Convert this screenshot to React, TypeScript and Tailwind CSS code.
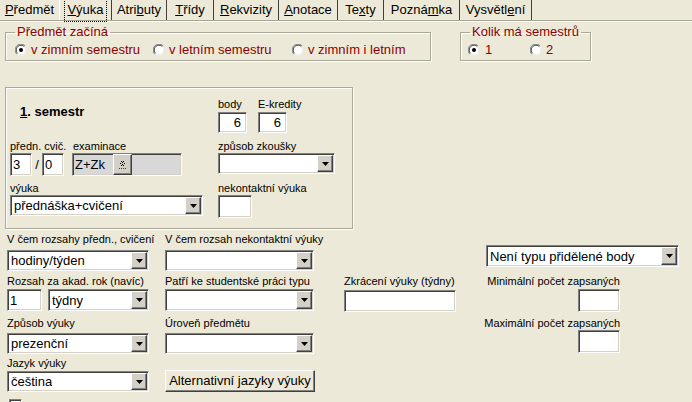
import React from "react";

const sunken =
  "border border-t-[#808080] border-l-[#808080] border-r-white border-b-white shadow-[inset_1px_1px_0_#404040,inset_-1px_-1px_0_#d4d0c8]";
const raised =
  "border border-t-white border-l-white border-r-[#404040] border-b-[#404040] shadow-[inset_-1px_-1px_0_#808080]";

const Label: React.FC<{ children: React.ReactNode; className?: string }> = ({ children, className = "" }) => (
  <div className={`h-[13px] text-[11px] leading-[13px] text-black whitespace-nowrap ${className}`}>{children}</div>
);

const Input: React.FC<{ value?: string; className?: string; right?: boolean }> = ({ value = "", className = "", right }) => (
  <div
    className={`flex items-center bg-white text-[13px] leading-none ${sunken} ${right ? "justify-end pr-[5px]" : "pl-[2px]"} ${className}`}
  >
    {value}
  </div>
);

const Select: React.FC<{ value?: string; className?: string }> = ({ value = "", className = "" }) => (
  <div className={`flex bg-white ${sunken} ${className}`}>
    <div className="flex flex-1 items-center pl-[3px] text-[13px] leading-none whitespace-nowrap overflow-hidden">{value}</div>
    <div className={`m-[1px] flex w-[16px] items-center justify-center bg-[#d4d0c8] ${raised}`}>
      <svg width="7" height="4" viewBox="0 0 7 4">
        <path d="M0 0h7L3.5 4z" fill="#000" />
      </svg>
    </div>
  </div>
);

const Radio: React.FC<{ checked?: boolean }> = ({ checked }) => (
  <svg width="12" height="12" viewBox="0 0 12 12" className="shrink-0">
    <circle cx="6" cy="6" r="5.5" fill="#fff" />
    <path d="M1.8 10.2A5.5 5.5 0 0 1 10.2 1.8" stroke="#808080" fill="none" />
    <path d="M2.6 9.4A4.5 4.5 0 0 1 9.4 2.6" stroke="#404040" fill="none" />
    <path d="M9.4 2.6A4.5 4.5 0 0 1 2.6 9.4" stroke="#e8e6dc" fill="none" />
    {checked && <circle cx="6" cy="6" r="2" fill="#000" />}
  </svg>
);

const tabs: { pre: string; key: string; post: string; w: string; active?: boolean }[] = [
  { pre: "", key: "P", post: "ředmět", w: "w-[59px]" },
  { pre: "", key: "V", post: "ýuka", w: "w-[53px]", active: true },
  { pre: "Atri", key: "b", post: "uty", w: "w-[55px]" },
  { pre: "", key: "T", post: "řídy", w: "w-[47px]" },
  { pre: "", key: "R", post: "ekvizity", w: "w-[65px]" },
  { pre: "", key: "A", post: "notace", w: "w-[59px]" },
  { pre: "Te", key: "x", post: "ty", w: "w-[46px]" },
  { pre: "Pozná", key: "m", post: "ka", w: "w-[76px]" },
  { pre: "Vysvětl", key: "e", post: "ní", w: "w-[72px]" },
];

const red = "text-[#8c0000]";

export default function App() {
  return (
    <div className="h-[402px] w-[692px] overflow-hidden bg-[#ece9d8] font-[Liberation_Sans,Arial,sans-serif] text-black">
      {/* tab strip */}
      <div className="flex h-[21px] border-b border-[#a8a597] shadow-[0_1px_0_#fff]">
        {tabs.map((t, i) => (
          <div
            key={i}
            className={`flex h-full items-center justify-center text-[13px] whitespace-nowrap ${t.w} ${
              t.active ? "border-l border-r border-l-white border-r-[#404040]" : i === 0 ? "" : "border-r border-[#404040]"
            }`}
          >
            <span className={t.active ? "border border-dotted border-black px-[2px] py-[1px]" : ""}>
              {t.pre}
              <span className="underline">{t.key}</span>
              {t.post}
            </span>
          </div>
        ))}
      </div>

      {/* group boxes */}
      <div className="mt-[4px] flex">
        <fieldset className="ml-[5px] h-[36px] w-[426px] min-w-0 border border-[#aca899] p-0 shadow-[1px_1px_0_#fff,inset_1px_1px_0_#fff]">
          <legend className={`ml-[9px] px-[2px] text-[13px] leading-[14px] ${red}`}>Předmět začíná</legend>
          <div className={`mt-[4px] flex text-[13px] leading-[14px] ${red}`}>
            <div className="ml-[9px] flex w-[138px] items-center gap-[4px]">
              <Radio checked />
              <span>v zimním semestru</span>
            </div>
            <div className="flex w-[139px] items-center gap-[4px]">
              <Radio />
              <span>v letním semestru</span>
            </div>
            <div className="flex items-center gap-[4px]">
              <Radio />
              <span>v zimním i letním</span>
            </div>
          </div>
        </fieldset>
        <fieldset className="ml-[29px] h-[36px] w-[131px] min-w-0 border border-[#aca899] p-0 shadow-[1px_1px_0_#fff,inset_1px_1px_0_#fff]">
          <legend className={`ml-[9px] px-[2px] text-[13px] leading-[14px] ${red}`}>Kolik má semestrů</legend>
          <div className={`mt-[4px] flex text-[13px] leading-[14px] ${red}`}>
            <div className="ml-[7px] flex w-[62px] items-center gap-[5px]">
              <Radio checked />
              <span>1</span>
            </div>
            <div className="flex items-center gap-[4px]">
              <Radio />
              <span>2</span>
            </div>
          </div>
        </fieldset>
      </div>

      {/* semester panel */}
      <div className="ml-[5px] mt-[26px] flex h-[142px] w-[348px] border border-[#aca899] pl-[4px] shadow-[1px_1px_0_#fff,inset_1px_1px_0_#fff]">
        <div className="w-[194px]">
          <div className="ml-[10px] mt-[16px] h-[15px] text-[13px] font-bold leading-[15px]">
            <span className="underline">1</span>. semestr
          </div>
          <div className="mt-[21px] flex">
            <Label className="w-[63px]">předn. cvič.</Label>
            <Label>examinace</Label>
          </div>
          <div className="flex h-[23px]">
            <Input value="3" className="w-[22px]" />
            <div className="flex w-[10px] items-center justify-center text-[13px]">/</div>
            <Input value="0" className="w-[22px]" />
            <div className={`ml-[8px] flex w-[110px] bg-[#d8d8d8] ${sunken}`}>
              <div className="flex w-[40px] items-center pl-[2px] text-[13px]">Z+Zk</div>
              <div className={`flex w-[19px] items-center justify-center bg-[#d4d0c8] ${raised}`}>
                <svg width="8" height="10" viewBox="0 0 8 10">
                  <path d="M2 1h1v1H2zM4 1h1v1H4zM3 2h1v1H3zM5 3h1v1H5zM1 3h1v1H1zM3 4h1v1H3zM2 5h1v1H2zM4 5h1v1H4z" fill="#000" />
                  <path d="M0 8h1v1H0zM2 8h1v1H2zM4 8h1v1H4zM6 8h1v1H6z" fill="#404040" />
                </svg>
              </div>
            </div>
          </div>
          <Label className="mt-[6px]">výuka</Label>
          <Select value="přednáška+cvičení" className="h-[21px] w-[193px]" />
        </div>
        <div className="ml-[14px] w-[118px]">
          <div className="mt-[10px] flex">
            <Label className="w-[40px]">body</Label>
            <Label>E-kredity</Label>
          </div>
          <div className="mt-[1px] flex h-[21px]">
            <Input value="6" right className="w-[29px]" />
            <Input value="6" right className="ml-[11px] w-[29px]" />
          </div>
          <Label className="mt-[7px]">způsob zkoušky</Label>
          <Select className="h-[21px] w-[117px]" />
          <Label className="mt-[8px]">nekontaktní výuka</Label>
          <Input className="h-[23px] w-[34px]" />
        </div>
      </div>

      {/* lower part */}
      <div className="flex">
        <div className="ml-[7px] w-[142px]">
          <Label className="mt-[4px]">V čem rozsahy předn., cvičení</Label>
          <Select value="hodiny/týden" className="mt-[4px] h-[21px] w-[142px]" />
          <Label className="mt-[4px]">Rozsah za akad. rok (navíc)</Label>
          <div className="mt-[1px] flex h-[22px]">
            <Input value="1" className="w-[35px]" />
            <Select value="týdny" className="ml-[6px] w-[101px]" />
          </div>
          <Label className="mt-[6px]">Způsob výuky</Label>
          <Select value="prezenční" className="mt-[3px] h-[21px] w-[142px]" />
          <Label className="mt-[3px]">Jazyk výuky</Label>
          <Select value="čeština" className="mt-[1px] h-[21px] w-[142px]" />
          <div className={`ml-[2px] mt-[7px] h-[13px] w-[13px] bg-white ${sunken}`} />
        </div>
        <div className="ml-[16px] w-[149px]">
          <Label className="mt-[4px]">V čem rozsah nekontaktní výuky</Label>
          <Select className="mt-[4px] h-[21px] w-[149px]" />
          <Label className="mt-[4px]">Patří ke studentské práci typu</Label>
          <Select className="mt-[1px] h-[22px] w-[149px]" />
          <Label className="mt-[6px]">Úroveň předmětu</Label>
          <Select className="mt-[3px] h-[21px] w-[149px]" />
          <button className={`mt-[16px] flex h-[22px] w-[150px] items-center justify-center bg-[#ece9d8] text-[13px] ${raised}`}>
            Alternativní jazyky výuky
          </button>
        </div>
        <div className="ml-[30px] w-[112px]">
          <Label className="mt-[46px]">Zkrácení výuky (týdny)</Label>
          <Input className="mt-[2px] h-[22px] w-[112px]" />
        </div>
        <div className="ml-[30px] w-[193px]">
          <Select value="Není typu přidělené body" className="mt-[16px] h-[22px] w-[193px]" />
          <div className="flex w-[134px] flex-col items-end">
            <Label className="mt-[8px]">Minimální počet zapsaných</Label>
            <Input className="mt-[1px] h-[23px] w-[42px]" />
            <Label className="mt-[5px]">Maximální počet zapsaných</Label>
            <Input className="h-[23px] w-[42px]" />
          </div>
        </div>
      </div>
    </div>
  );
}
